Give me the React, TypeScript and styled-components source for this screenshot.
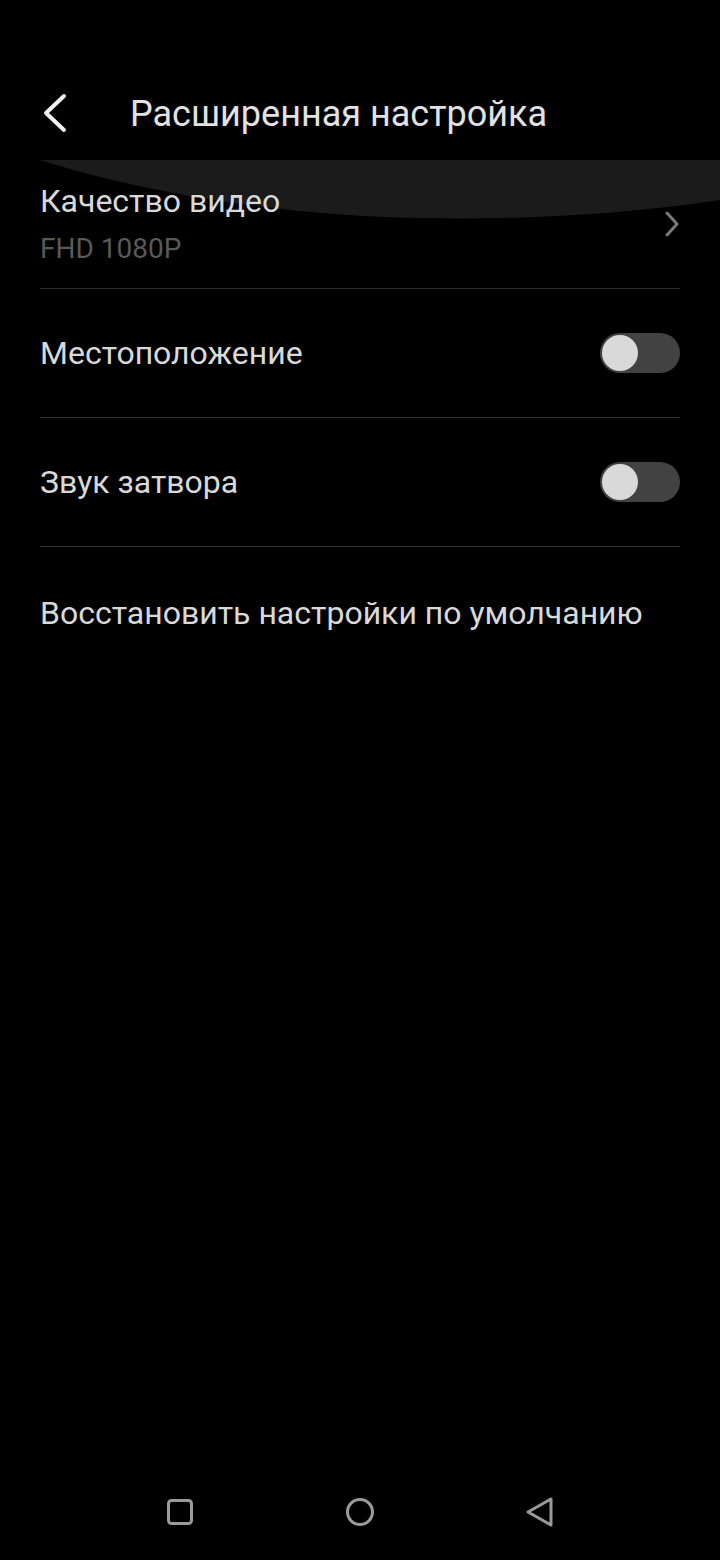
import React, { useState } from "react";
import styled, { createGlobalStyle } from "styled-components";

const GlobalStyle = createGlobalStyle`
  html, body {
    margin: 0;
    padding: 0;
    background: #000;
  }
  body {
    font-family: Roboto, "Noto Sans", sans-serif;
    -webkit-font-smoothing: antialiased;
  }
`;

const Screen = styled.div`
  position: relative;
  width: 720px;
  height: 1560px;
  background: #000;
  display: flex;
  flex-direction: column;
  overflow: hidden;
`;

const Header = styled.header`
  height: 160px;
  display: flex;
  align-items: center;
  padding: 66px 0 0 40px;
  box-sizing: border-box;
`;

const BackButton = styled.button`
  width: 30px;
  height: 40px;
  padding: 0;
  margin-right: 60px;
  background: none;
  border: none;
  display: flex;
  align-items: center;
  justify-content: center;
  cursor: pointer;
`;

const Title = styled.h1`
  margin: 0;
  font-size: 36px;
  font-weight: 400;
  color: #e2e2e2;
  line-height: 40px;
  padding-top: 2px;
`;

const Glare = styled.svg`
  position: absolute;
  left: 0;
  top: 160px;
  pointer-events: none;
`;

const List = styled.div`
  position: relative;
  display: flex;
  flex-direction: column;
  padding: 0 40px;
`;

const Row = styled.div<{ $height: number }>`
  height: ${(p) => p.$height}px;
  display: flex;
  align-items: center;
  justify-content: space-between;
  border-bottom: 1px solid #2e2e2e;
  box-sizing: border-box;
`;

const LastRow = styled.div`
  height: 132px;
  display: flex;
  align-items: center;
`;

const TextBlock = styled.div`
  display: flex;
  flex-direction: column;
  gap: 14px;
`;

const Label = styled.span`
  font-size: 32px;
  color: #d9d9d9;
  line-height: 36px;
`;

const SubLabel = styled.span`
  font-size: 28px;
  color: #595959;
  line-height: 32px;
`;

const Track = styled.button<{ $on: boolean }>`
  width: 80px;
  height: 40px;
  border-radius: 20px;
  border: none;
  padding: 0 2px;
  background: ${(p) => (p.$on ? "#4a8cff" : "#424242")};
  display: flex;
  align-items: center;
  justify-content: ${(p) => (p.$on ? "flex-end" : "flex-start")};
  cursor: pointer;
`;

const Thumb = styled.span`
  width: 36px;
  height: 36px;
  border-radius: 50%;
  background: #d9d9d9;
`;

const Spacer = styled.div`
  flex: 1;
`;

const NavBar = styled.nav`
  height: 96px;
  display: flex;
  align-items: center;
  justify-content: center;
`;

const NavSlot = styled.div`
  width: 180px;
  display: flex;
  justify-content: center;
`;

const Toggle: React.FC<{ initial?: boolean }> = ({ initial = false }) => {
  const [on, setOn] = useState(initial);
  return (
    <Track $on={on} onClick={() => setOn(!on)}>
      <Thumb />
    </Track>
  );
};

const App: React.FC = () => {
  return (
    <Screen>
      <GlobalStyle />
      <Header>
        <BackButton>
          <svg width="26" height="40" viewBox="0 0 26 40">
            <path d="M22 3 L4 20 L22 37" fill="none" stroke="#f2f2f2" strokeWidth="4" strokeLinecap="round" strokeLinejoin="round" />
          </svg>
        </BackButton>
        <Title>Расширенная настройка</Title>
      </Header>

      <Glare width="720" height="60" viewBox="0 0 720 60">
        <path d="M40 0 L720 0 L720 40 C620 55 520 60 420 58 C300 56 160 38 40 0 Z" fill="#1b1b1b" />
      </Glare>

      <List>
        <Row $height={129}>
          <TextBlock>
            <Label>Качество видео</Label>
            <SubLabel>FHD 1080P</SubLabel>
          </TextBlock>
          <svg width="16" height="26" viewBox="0 0 16 26">
            <path d="M3 2 L13 13 L3 24" fill="none" stroke="#7a7a7a" strokeWidth="3" strokeLinecap="round" strokeLinejoin="round" />
          </svg>
        </Row>
        <Row $height={129}>
          <Label>Местоположение</Label>
          <Toggle />
        </Row>
        <Row $height={129}>
          <Label>Звук затвора</Label>
          <Toggle />
        </Row>
        <LastRow>
          <Label>Восстановить настройки по умолчанию</Label>
        </LastRow>
      </List>

      <Spacer />

      <NavBar>
        <NavSlot>
          <svg width="28" height="28" viewBox="0 0 28 28">
            <rect x="2.5" y="2.5" width="23" height="23" rx="3" fill="none" stroke="#9a9a9a" strokeWidth="3" />
          </svg>
        </NavSlot>
        <NavSlot>
          <svg width="30" height="30" viewBox="0 0 30 30">
            <circle cx="15" cy="15" r="12.5" fill="none" stroke="#9a9a9a" strokeWidth="3" />
          </svg>
        </NavSlot>
        <NavSlot>
          <svg width="30" height="32" viewBox="0 0 30 32">
            <path d="M26 3 L3 16 L26 29 Z" fill="none" stroke="#9a9a9a" strokeWidth="3" strokeLinejoin="round" />
          </svg>
        </NavSlot>
      </NavBar>
    </Screen>
  );
};

export default App;
